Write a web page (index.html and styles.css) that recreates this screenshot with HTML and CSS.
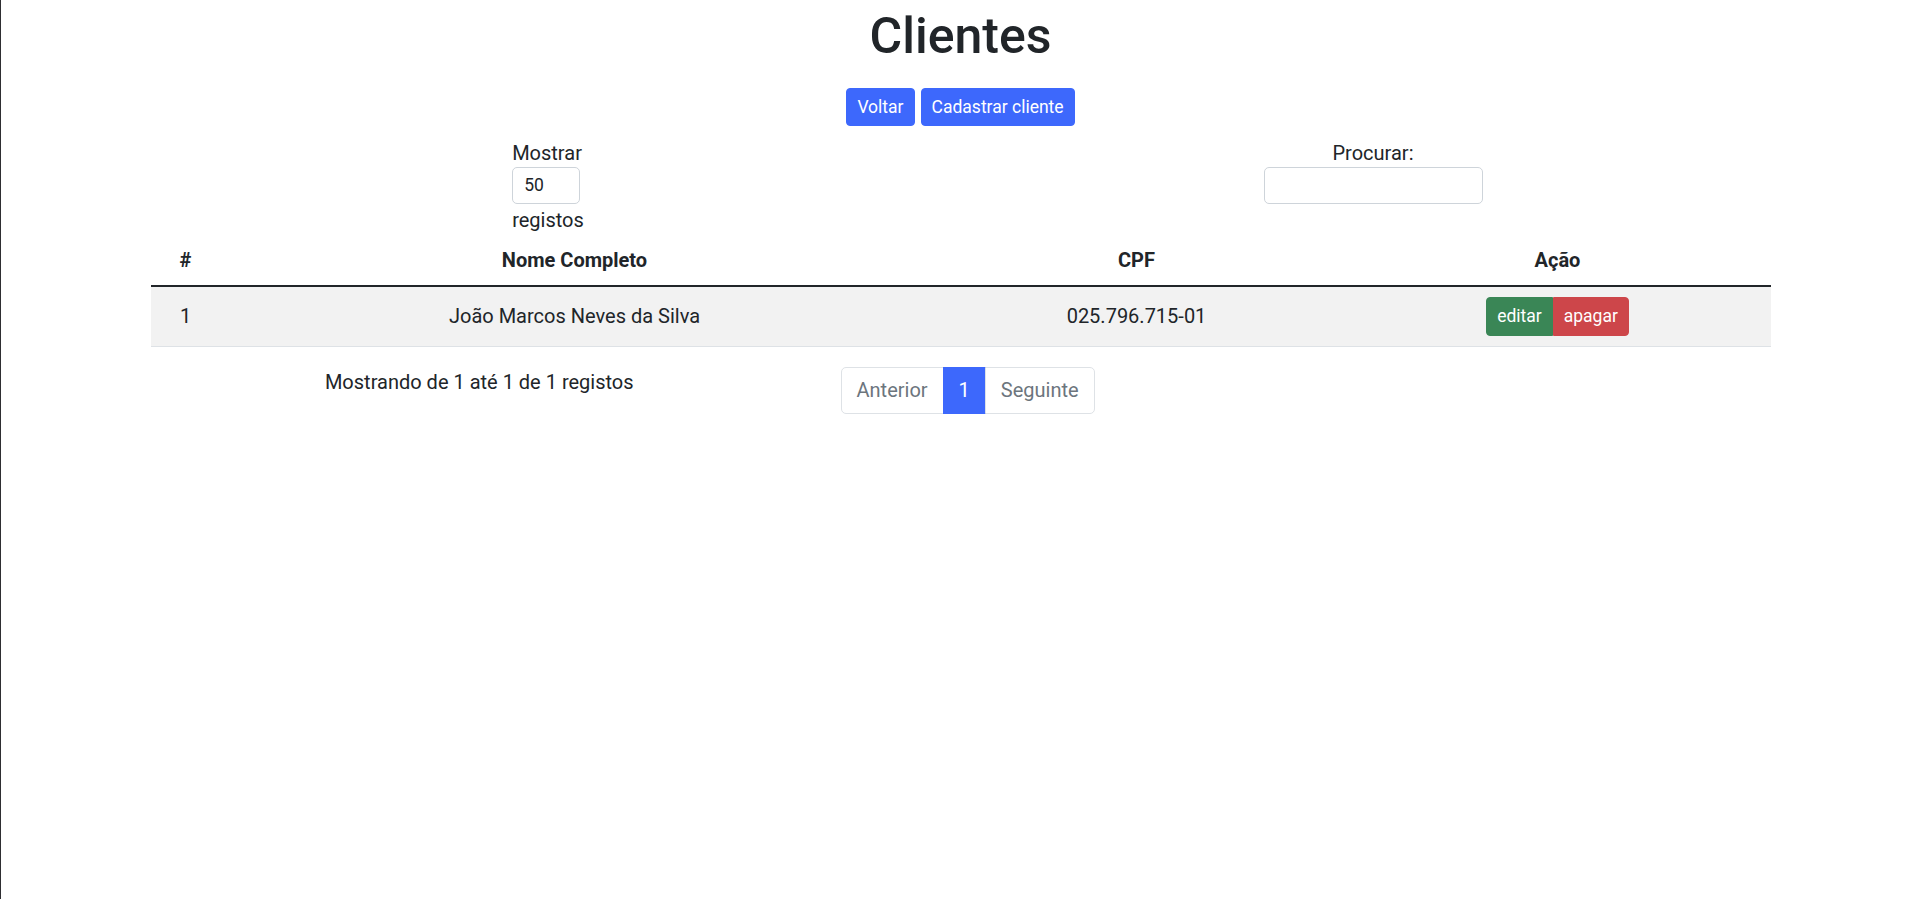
FILE: index.html
```html
<!DOCTYPE html>
<html lang="pt">
<head>
<meta charset="utf-8">
<title>Clientes</title>
<link rel="stylesheet" href="styles.css">
</head>
<body>
<div class="container">
  <h1 class="title">Clientes</h1>
  <div class="actions">
    <a class="btn btn-primary" href="#">Voltar</a>
    <a class="btn btn-primary" href="#">Cadastrar cliente</a>
  </div>

  <div class="row filters">
    <div class="col-half">
      <div class="length">
        <span class="line">Mostrar</span>
        <span class="select">50</span>
        <span class="line">registos</span>
      </div>
    </div>
    <div class="col-half">
      <div class="search">
        <span class="line">Procurar:</span>
        <span class="search-input"></span>
      </div>
    </div>
  </div>

  <table class="table">
    <thead>
      <tr>
        <th class="c-num">#</th>
        <th class="c-name">Nome Completo</th>
        <th class="c-cpf">CPF</th>
        <th class="c-act">Ação</th>
      </tr>
    </thead>
    <tbody>
      <tr>
        <td>1</td>
        <td>João Marcos Neves da Silva</td>
        <td>025.796.715-01</td>
        <td>
          <div class="btn-group">
            <a class="btn btn-success" href="#">editar</a><a class="btn btn-danger" href="#">apagar</a>
          </div>
        </td>
      </tr>
    </tbody>
  </table>

  <div class="row footer">
    <div class="col-info">Mostrando de 1 até 1 de 1 registos</div>
    <div class="col-pag">
      <ul class="pagination">
        <li class="page-item"><span class="page-link">Anterior</span></li>
        <li class="page-item active"><span class="page-link">1</span></li>
        <li class="page-item"><span class="page-link">Seguinte</span></li>
      </ul>
    </div>
  </div>
</div>
</body>
</html>
```
FILE: styles.css
```css
* { box-sizing: border-box; }
html, body { margin: 0; padding: 0; }
body {
  min-height: 100vh;
  border-left: 1px solid #2e2e32;
  font-family: Roboto, "Segoe UI", sans-serif;
  font-size: 20px;
  line-height: 1.5;
  color: #212529;
  background: #fff;
}
.container {
  width: 1650px;
  margin: 0 auto;
  padding: 0 15px;
}
.title {
  margin: 6px 0 0;
  font-size: 50px;
  font-weight: 500;
  line-height: 1.2;
  text-align: center;
}
.actions {
  display: flex;
  justify-content: center;
  gap: 6px;
  margin-top: 22px;
}
.btn {
  display: inline-block;
  padding: 5px 10px;
  font-size: 17.5px;
  line-height: 1.5;
  color: #fff;
  text-decoration: none;
  border: 1px solid transparent;
  border-radius: 4px;
}
.btn-primary { background: #3d68fc; border-color: #3d68fc; }
.btn-success { background: #3a8656; border-color: #3a8656; }
.btn-danger { background: #cd464a; border-color: #cd464a; }

.row {
  display: flex;
  margin: 0 -15px;
}
.filters { margin-top: 11px; }
.col-half {
  flex: 0 0 50%;
  padding: 0 15px;
  display: flex;
  justify-content: center;
}
.length, .search {
  display: flex;
  flex-direction: column;
  align-items: flex-start;
}
.search { align-items: center; }
.line { display: block; height: 30px; padding-top: 1px; }
.select {
  display: block;
  width: 68px;
  height: 37px;
  padding: 5px 11px;
  font-size: 17.5px;
  line-height: 25px;
  border: 1px solid #ced4da;
  border-radius: 5px;
}
.search-input {
  display: block;
  width: 219px;
  height: 37px;
  border: 1px solid #ced4da;
  border-radius: 5px;
}

.table {
  width: 100%;
  border-collapse: collapse;
  margin-top: 1px;
}
.table th, .table td {
  padding: 10px;
  text-align: center;
  vertical-align: middle;
}
.table th {
  font-weight: 700;
  border-bottom: 2.5px solid #212529;
}
.table td {
  background: #f2f2f2;
  border-bottom: 1px solid #dee2e6;
}
.c-num { width: 70px; }
.c-name { width: 708px; }
.c-cpf { width: 416px; }
.btn-group { display: inline-flex; vertical-align: middle; }
.btn-group .btn-success { border-radius: 4px 0 0 4px; }
.btn-group .btn-danger { border-radius: 0 4px 4px 0; }

.footer { margin-top: 18px; }
.col-info {
  flex: 0 0 41.6667%;
  padding: 2px 15px 0;
  text-align: center;
}
.col-pag {
  flex: 0 0 58.3333%;
  padding: 0 15px;
}
.pagination {
  display: flex;
  list-style: none;
  margin: 2px 0 0 2.5px;
  padding: 0;
}
.page-link {
  display: block;
  padding: 7.5px 15px;
  line-height: 30px;
  color: #6c757d;
  border: 1px solid #dee2e6;
  margin-left: -1px;
}
.page-item:first-child .page-link { margin-left: 0; border-radius: 5px 0 0 5px; }
.page-item:last-child .page-link { border-radius: 0 5px 5px 0; }
.page-item.active .page-link { background: #3d68fc; border-color: #3d68fc; color: #fff; }
```
